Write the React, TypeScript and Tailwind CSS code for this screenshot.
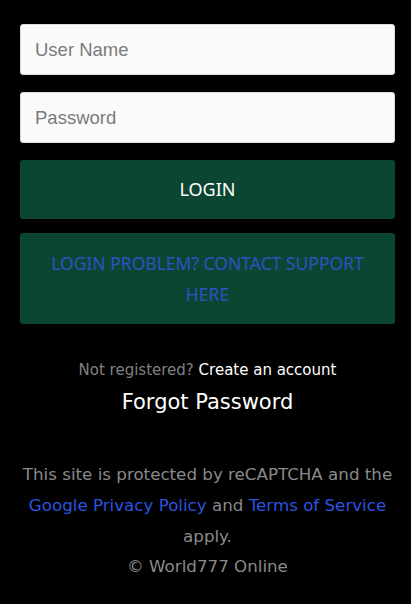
import React from "react";

export default function App() {
  return (
    <div className="min-h-[604px] w-full bg-black pl-5 pr-4 pt-6">
      <input
        placeholder="User Name"
        className="block h-[51px] w-full rounded-[3px] border border-[#dcdcdc] bg-[#fafafa] px-[14px] text-[18.5px] text-black placeholder:text-[#7b7b7b] outline-none"
        style={{ fontFamily: '"Liberation Sans", Arial, sans-serif' }}
      />
      <input
        placeholder="Password"
        type="password"
        className="mt-[17px] block h-[51px] w-full rounded-[3px] border border-[#dcdcdc] bg-[#fafafa] px-[14px] text-[18.5px] text-black placeholder:text-[#7b7b7b] outline-none"
        style={{ fontFamily: '"Liberation Sans", Arial, sans-serif' }}
      />
      <button
        className="mt-[17px] flex h-[59px] w-full items-center justify-center rounded-[3px] bg-[#0b4632] text-[18px] text-white"
        style={{ fontFamily: '"Noto Sans", "Open Sans", sans-serif' }}
      >
        LOGIN
      </button>
      <div
        className="mt-[14px] flex h-[91px] w-full items-center justify-center rounded-[3px] bg-[#0b4632] px-4 text-center text-[17.5px] leading-[31px] text-[#2d52c4]"
        style={{ fontFamily: '"Noto Sans", "Open Sans", sans-serif' }}
      >
        LOGIN PROBLEM? CONTACT SUPPORT HERE
      </div>
      <div
        className="mt-[36px] text-center"
        style={{ fontFamily: '"DejaVu Sans", Verdana, sans-serif' }}
      >
        <div className="text-[15px] leading-[20px]">
          <span className="text-[#808080]">Not registered? </span>
          <span className="text-white">Create an account</span>
        </div>
        <div className="mt-[10px] text-[21px] leading-[24px] text-white">Forgot Password</div>
        <div className="mt-[45px] text-[16.7px] leading-[31px] text-[#8a8a8a]">
          This site is protected by reCAPTCHA and the{" "}
          <span className="text-[#2b54e0]">Google Privacy Policy</span> and{" "}
          <span className="text-[#2b54e0]">Terms of Service</span> apply.
        </div>
        <div className="-mt-[1px] text-[16.7px] leading-[30px] text-[#8a8a8a]">© World777 Online</div>
      </div>
    </div>
  );
}
